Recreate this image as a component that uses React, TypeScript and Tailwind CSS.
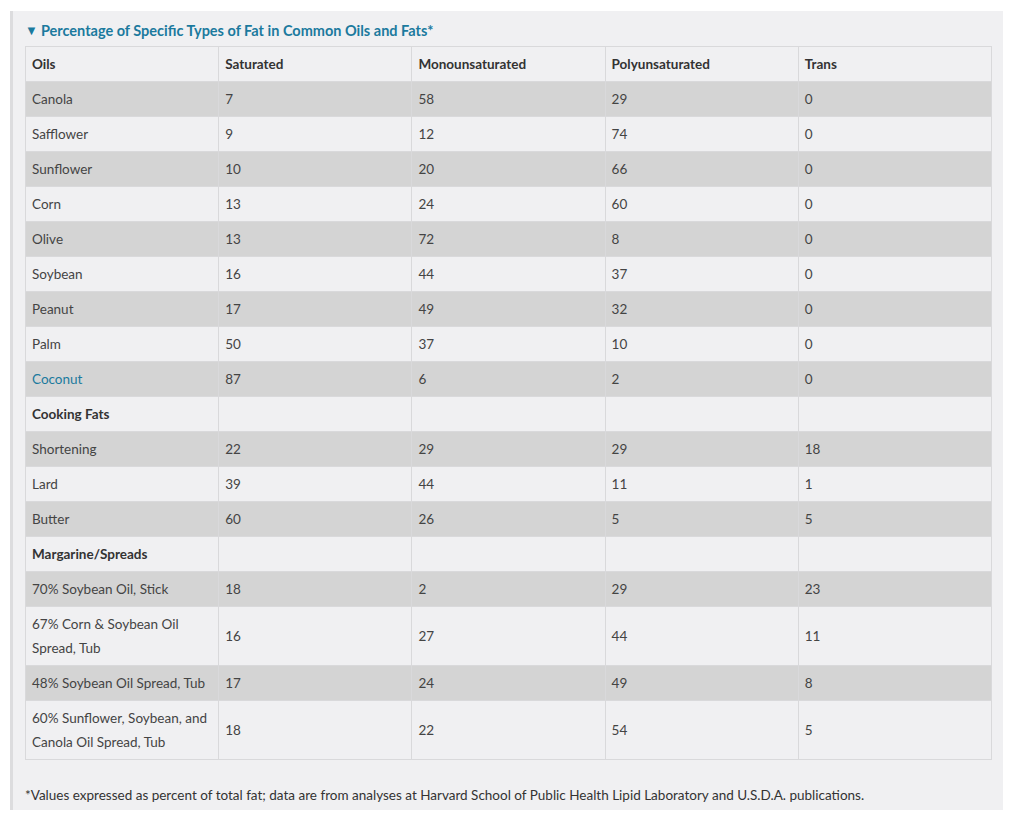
const rows: { name: string; values?: string[]; heading?: boolean; link?: boolean }[] = [
  { name: "Canola", values: ["7", "58", "29", "0"] },
  { name: "Safflower", values: ["9", "12", "74", "0"] },
  { name: "Sunflower", values: ["10", "20", "66", "0"] },
  { name: "Corn", values: ["13", "24", "60", "0"] },
  { name: "Olive", values: ["13", "72", "8", "0"] },
  { name: "Soybean", values: ["16", "44", "37", "0"] },
  { name: "Peanut", values: ["17", "49", "32", "0"] },
  { name: "Palm", values: ["50", "37", "10", "0"] },
  { name: "Coconut", values: ["87", "6", "2", "0"], link: true },
  { name: "Cooking Fats", heading: true },
  { name: "Shortening", values: ["22", "29", "29", "18"] },
  { name: "Lard", values: ["39", "44", "11", "1"] },
  { name: "Butter", values: ["60", "26", "5", "5"] },
  { name: "Margarine/Spreads", heading: true },
  { name: "70% Soybean Oil, Stick", values: ["18", "2", "29", "23"] },
  { name: "67% Corn & Soybean Oil Spread, Tub", values: ["16", "27", "44", "11"] },
  { name: "48% Soybean Oil Spread, Tub", values: ["17", "24", "49", "8"] },
  { name: "60% Sunflower, Soybean, and Canola Oil Spread, Tub", values: ["18", "22", "54", "5"] },
]

const headers = ["Oils", "Saturated", "Monounsaturated", "Polyunsaturated", "Trans"]

export default function App() {
  return (
    <div className="min-h-screen bg-white pt-[11px] pl-[10px] pr-[12px] font-['Lato','Liberation_Sans',sans-serif] text-[13.5px] text-[#444]">
      <div className="border-l-[3px] border-[#dcdcde] bg-[#f0f0f2] pl-[12px] pr-[11px] pt-[8px] pb-[5px]">
        {/* Title */}
        <div className="flex items-center gap-[3px] h-[24px] text-[14.5px] font-bold text-[#1b7a9e]">
          <span className="text-[13px]">▼</span>
          <span>Percentage of Specific Types of Fat in Common Oils and Fats*</span>
        </div>

        {/* Table */}
        <table className="mt-[3px] w-full table-fixed border-collapse leading-[24px]">
          <thead>
            <tr>
              {headers.map((h) => (
                <th key={h} className="border border-[#d9d9db] px-[6px] py-[5px] text-left font-bold text-[#333]">
                  {h}
                </th>
              ))}
            </tr>
          </thead>
          <tbody>
            {rows.map((row, i) => (
              <tr key={row.name} className={i % 2 === 0 ? "bg-[#d4d4d4]" : "bg-[#f0f0f2]"}>
                <td className={`border border-[#d9d9db] px-[6px] py-[5px] ${row.heading ? "font-bold text-[#333]" : ""} ${row.link ? "text-[#1b7a9e]" : ""}`}>
                  {row.name}
                </td>
                {(row.values ?? ["", "", "", ""]).map((v, j) => (
                  <td key={j} className="border border-[#d9d9db] px-[6px] py-[5px]">
                    {v}
                  </td>
                ))}
              </tr>
            ))}
          </tbody>
        </table>

        {/* Footnote */}
        <p className="mt-[25px] leading-[20px] text-[#333]">
          *Values expressed as percent of total fat; data are from analyses at Harvard School of Public Health Lipid Laboratory and U.S.D.A. publications.
        </p>
      </div>
    </div>
  )
}
